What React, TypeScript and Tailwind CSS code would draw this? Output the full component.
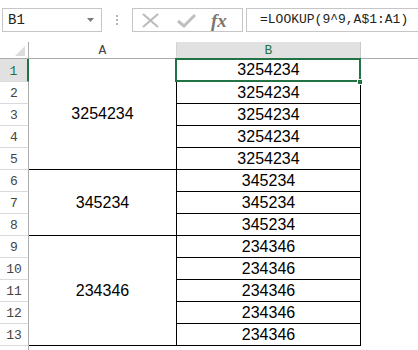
const MONO = "font-['Liberation_Mono','Noto_Sans_CJK_SC',monospace]";

type Group = { value: string; rows: number };

const GROUPS: Group[] = [
  { value: "3254234", rows: 5 },
  { value: "345234", rows: 3 },
  { value: "234346", rows: 5 },
];

const CELLS = GROUPS.flatMap((g) => Array.from({ length: g.rows }, () => g.value));

const ROW_START = ["row-start-2", "row-start-7", "row-start-10"];
const ROW_SPAN = { 5: "row-span-5", 3: "row-span-3" } as Record<number, string>;

function Toolbar() {
  return (
    <div className="flex h-[32px] items-start pt-[8px]">
      <div className="ml-[2px] flex h-[24px] w-[100px] items-center justify-between border border-[#c6c6c6] pl-[5px] pr-[7px]">
        <span className={`${MONO} text-[14px] text-[#222]`}>B1</span>
        <svg width="7" height="4" viewBox="0 0 7 4">
          <polygon points="0,0 7,0 3.5,4" fill="#7a7a7a" />
        </svg>
      </div>
      <div className="flex h-[24px] w-[30px] flex-col items-center justify-center gap-[2px]">
        <span className="h-[2px] w-[2px] bg-[#b4b4b4]" />
        <span className="h-[2px] w-[2px] bg-[#b4b4b4]" />
        <span className="h-[2px] w-[2px] bg-[#b4b4b4]" />
      </div>
      <div className="flex h-[24px] w-[111px] items-center border border-[#c6c6c6]">
        <svg className="ml-[8px]" width="19" height="15" viewBox="0 0 19 15">
          <path d="M2 1 L17 14 M17 1 L2 14" stroke="#bcbcbc" strokeWidth="2.2" fill="none" />
        </svg>
        <svg className="ml-[17px]" width="19" height="15" viewBox="0 0 19 15">
          <path d="M1 8 L7 13 L18 2" stroke="#bfbfbf" strokeWidth="3" fill="none" />
        </svg>
        <span className="ml-[15px] font-['Liberation_Serif',serif] text-[19px] font-bold italic leading-none text-[#7d776b]">
          fx
        </span>
      </div>
      <div className="ml-[3px] flex h-[24px] flex-1 items-center border border-r-0 border-[#c6c6c6] pl-[13px]">
        <span className={`${MONO} text-[13px] text-[#222]`}>=LOOKUP(9^9,A$1:A1)</span>
      </div>
    </div>
  );
}

function Sheet() {
  return (
    <div className="relative mt-[10px] grid grid-cols-[29px_148px_184px_1fr] grid-rows-[17px_23px_repeat(12,22px)_10px]">
      {/* header row */}
      <div className="relative col-start-1 row-start-1 border-r border-b border-[#ababab]">
        <svg className="absolute right-[3px] bottom-[2px]" width="10" height="10" viewBox="0 0 10 10">
          <polygon points="10,0 10,10 0,10" fill="#dcdcdc" />
        </svg>
      </div>
      <div
        className={`col-start-2 row-start-1 flex items-end justify-center border-r border-b border-r-[#d4d4d4] border-b-[#ababab] ${MONO} text-[13px] leading-[15px] text-[#444]`}
      >
        A
      </div>
      <div
        className={`col-start-3 row-start-1 flex items-end justify-center border-r border-b border-r-[#c8c8c8] border-b-[#ababab] bg-[#e1e1e1] ${MONO} text-[13px] leading-[15px] text-[#217346]`}
      >
        B
      </div>
      <div className="col-start-4 row-start-1 border-b border-[#ababab]" />

      {/* row headers */}
      {CELLS.map((_, i) => (
        <div
          key={`h${i}`}
          style={{ gridRowStart: i + 2 }}
          className={`col-start-1 flex items-end justify-center border-b border-b-[#dadada] pb-[2px] ${MONO} text-[13px] leading-[15px] ${
            i === 0
              ? "border-r-2 border-r-[#217346] bg-[#e1e1e1] text-[#217346]"
              : "border-r border-r-[#ababab] text-[#444]"
          }`}
        >
          {i + 1}
        </div>
      ))}
      <div className="col-start-1 row-start-15 border-r border-[#ababab]" />

      {/* merged column A */}
      {GROUPS.map((g, i) => (
        <div
          key={`a${i}`}
          className={`col-start-2 ${ROW_START[i]} ${ROW_SPAN[g.rows]} flex items-center justify-center border-r border-b border-black font-['Liberation_Sans',sans-serif] text-[16px] text-black`}
        >
          {g.value}
        </div>
      ))}

      {/* column B */}
      {CELLS.map((v, i) => (
        <div
          key={`b${i}`}
          style={{ gridRowStart: i + 2 }}
          className="col-start-3 flex items-center justify-center border-r border-b border-black font-['Liberation_Sans',sans-serif] text-[16px] text-black"
        >
          {v}
        </div>
      ))}

      {/* selection on B1 */}
      <div className="pointer-events-none absolute top-[16px] left-[175px] h-[24px] w-[186px] border-2 border-[#217346]" />
      <div className="pointer-events-none absolute top-[37px] left-[357px] h-[6px] w-[6px] border border-white bg-[#217346]" />
    </div>
  );
}

export default function App() {
  return (
    <div className="h-[350px] w-[418px] overflow-hidden bg-white">
      <Toolbar />
      <Sheet />
    </div>
  );
}
